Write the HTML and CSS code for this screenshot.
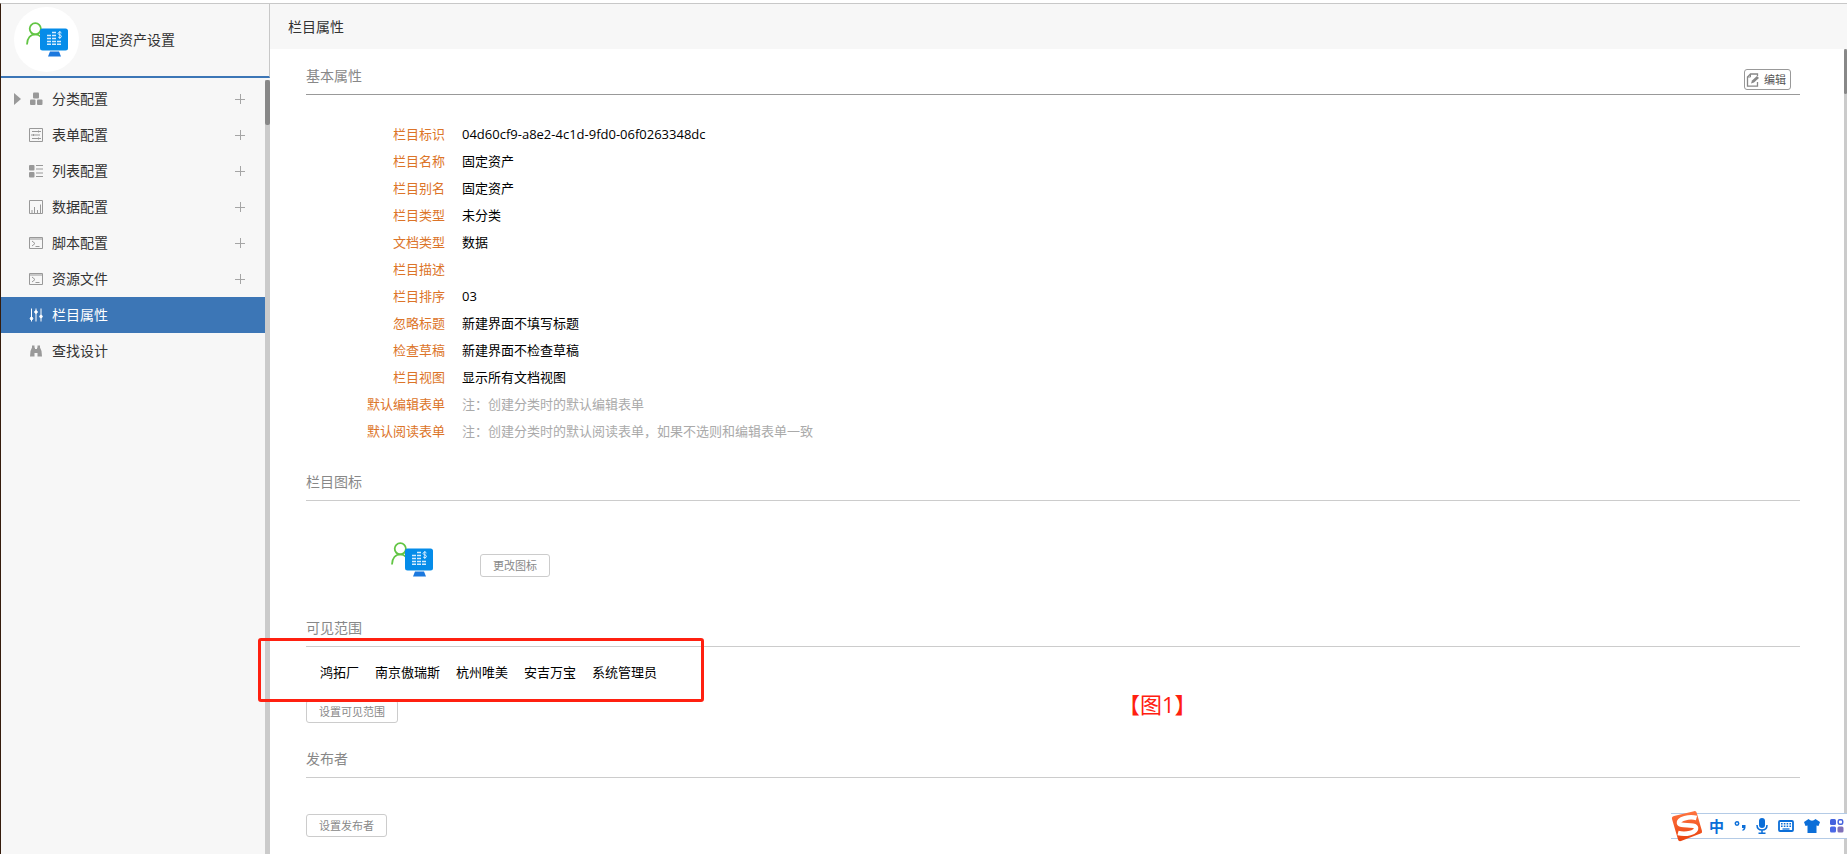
FILE: index.html
```html
<!DOCTYPE html>
<html lang="zh-CN">
<head>
    <meta charset="UTF-8">
    <title>固定资产设置</title>
    <link rel="stylesheet" href="styles.css">
</head>
<body>
    <!-- shared icon used in the sidebar header and the icon section -->
    <svg class="defs" width="0" height="0" aria-hidden="true">
        <symbol id="asset" viewBox="0 0 42 36">
            <circle cx="9.3" cy="7.8" r="5.6" fill="none" stroke="#62c544" stroke-width="1.8"/>
            <path d="M1 23.500C1 17 4.500 13.400 9.500 13.400Q12.500 13.400 15 16" fill="none" stroke="#62c544" stroke-width="1.8"/>
            <rect x="14" y="7.500" width="28" height="22" rx="2.5" fill="#058ce9"/>
            <path d="M24 30.500h9l2 5H22z" fill="#1b78de"/>
            <path d="M21 14.500h4M21 17.500h4M21 20.500h4M21 23.300h4M26 11.500h4M26 14.500h4M26 17.500h4M26 20.500h4M26 23.300h4M31 20.500h4M31 23.300h4" stroke="#d5ecff" stroke-width="1.6"/>
            <path d="M35.500 12C35 10.800 32 10.800 32 12.500C32 14 35.500 13.500 35.500 15.500C35.500 17 32.500 17 32 15.700M33.800 10v8" fill="none" stroke="#d5ecff" stroke-width="1"/>
        </symbol>
    </svg>

    <div class="page">
        <aside class="sidebar">
            <header class="app-title">
                <span class="avatar"><svg class="asset-icon"><use href="#asset"/></svg></span>
                <span>固定资产设置</span>
            </header>
            <div class="sidebar-body">
                <nav class="menu">
                    <div class="menu-item">
                        <span class="caret"></span>
                        <svg class="icon" viewBox="0 0 14 14" fill="#999"><rect x="4" y="0.500" width="6" height="6" rx="1"/><rect x="1" y="7.500" width="5.500" height="5.500" rx="1"/><rect x="8" y="7.500" width="5.500" height="5.500" rx="1"/></svg>
                        <a href="#">分类配置</a>
                        <button class="add" aria-label="添加分类配置"></button>
                    </div>
                    <div class="menu-item">
                        <svg class="icon" viewBox="0 0 14 14" fill="none" stroke="#999"><path d="M.5 .5h13v13H.5zM3 3.500h9M2 7h9M3 10.500h9M9.500 2.500v2M4.500 6v2M9.500 9.500v2"/></svg>
                        <a href="#">表单配置</a>
                        <button class="add" aria-label="添加表单配置"></button>
                    </div>
                    <div class="menu-item">
                        <svg class="icon" viewBox="0 0 14 14" fill="#999"><rect x="0" y="1" width="5.500" height="5.500" rx="1"/><rect x="0" y="8" width="5.500" height="5.500" rx="1"/><path d="M7 1h7v1H7zM7 4.500h7v1H7zM7 8.500h7v1H7zM7 12h7v1H7z"/></svg>
                        <a href="#">列表配置</a>
                        <button class="add" aria-label="添加列表配置"></button>
                    </div>
                    <div class="menu-item">
                        <svg class="icon" viewBox="0 0 14 14" fill="none" stroke="#999"><path d="M.5 .5h13v13H.5z"/><path d="M3 13v-3M5.500 13V7M8.500 13v-3M11.500 13V4.500"/></svg>
                        <a href="#">数据配置</a>
                        <button class="add" aria-label="添加数据配置"></button>
                    </div>
                    <div class="menu-item">
                        <svg class="icon" viewBox="0 0 14 14" fill="none" stroke="#999"><path d="M.5 1.500h13v11H.5zM1 3h12M3 5l3 2.500-3 2.500M6.500 10.500h4"/></svg>
                        <a href="#">脚本配置</a>
                        <button class="add" aria-label="添加脚本配置"></button>
                    </div>
                    <div class="menu-item">
                        <svg class="icon" viewBox="0 0 14 14" fill="none" stroke="#999"><path d="M.5 1.500h13v11H.5zM1 3h12M3 5l3 2.500-3 2.500M6.500 10.500h4"/></svg>
                        <a href="#">资源文件</a>
                        <button class="add" aria-label="添加资源文件"></button>
                    </div>
                    <div class="menu-item active">
                        <svg class="icon" viewBox="0 0 14 14" fill="#fff" stroke="#fff"><path d="M2.500 .5v13M7 .5v13M12 .5v13"/><circle cx="2.500" cy="10.500" r="1.300"/><circle cx="7" cy="4" r="1.300"/><circle cx="12" cy="8.500" r="1.300"/></svg>
                        <a href="#">栏目属性</a>
                    </div>
                    <div class="menu-item">
                        <svg class="icon" viewBox="0 0 14 14" fill="#999"><path d="M3 1.500h2.500v2L6 4v1h2V4l.5-.5v-2H11v2l1.500 3.500.5 5.500H8.500V9h-3v3.500H1L1.500 7 3 3.500z"/></svg>
                        <a href="#">查找设计</a>
                    </div>
                </nav>
                <div class="scrollbar"><div class="thumb"></div></div>
            </div>
        </aside>

        <main class="main">
            <h1>栏目属性</h1>
            <div class="main-body">
                <div class="content">
                    <section>
                        <h2 class="dark">基本属性
                            <button class="btn edit">
                                <svg width="14" height="14" viewBox="0 0 14 14"><path d="M11.500 9v4.200H1.500V4L4.500 1h7v2" fill="none" stroke="#888" stroke-width="1.300"/><path d="M1.500 4h3V1" fill="none" stroke="#888"/><path d="M5 10.500l1-3 5-4.500 2 2-5 4.500z" fill="#888"/></svg>编辑
                            </button>
                        </h2>
                        <dl class="props">
                            <dt>栏目标识</dt><dd>04d60cf9-a8e2-4c1d-9fd0-06f0263348dc</dd>
                            <dt>栏目名称</dt><dd>固定资产</dd>
                            <dt>栏目别名</dt><dd>固定资产</dd>
                            <dt>栏目类型</dt><dd>未分类</dd>
                            <dt>文档类型</dt><dd>数据</dd>
                            <dt>栏目描述</dt><dd></dd>
                            <dt>栏目排序</dt><dd>03</dd>
                            <dt>忽略标题</dt><dd>新建界面不填写标题</dd>
                            <dt>检查草稿</dt><dd>新建界面不检查草稿</dd>
                            <dt>栏目视图</dt><dd>显示所有文档视图</dd>
                            <dt>默认编辑表单</dt><dd class="note">注：创建分类时的默认编辑表单</dd>
                            <dt>默认阅读表单</dt><dd class="note">注：创建分类时的默认阅读表单，如果不选则和编辑表单一致</dd>
                        </dl>
                    </section>

                    <section>
                        <h2>栏目图标</h2>
                        <div class="icon-row">
                            <svg class="asset-icon"><use href="#asset"/></svg>
                            <button class="btn">更改图标</button>
                        </div>
                    </section>

                    <section>
                        <h2>可见范围</h2>
                        <ul class="scope">
                            <li>鸿拓厂</li>
                            <li>南京傲瑞斯</li>
                            <li>杭州唯美</li>
                            <li>安吉万宝</li>
                            <li>系统管理员</li>
                        </ul>
                        <button class="btn">设置可见范围</button>
                    </section>

                    <section>
                        <h2>发布者</h2>
                        <div class="publisher"><button class="btn">设置发布者</button></div>
                    </section>
                </div>
                <div class="scrollbar"><div class="thumb"></div></div>
            </div>
        </main>

        <!-- annotations -->
        <div class="mark-box"></div>
        <div class="mark-text">【图1】</div>

        <!-- input method bar -->
        <div class="ime">
            <svg class="ime-logo" width="32" height="32" viewBox="0 0 32 32">
                <defs><linearGradient id="orange" x1="0" y1="0" x2="0" y2="1"><stop offset="0" stop-color="#ff7440"/><stop offset="1" stop-color="#e9420f"/></linearGradient></defs>
                <path d="M3 6L23 1.200q2.200-.5 2.700 1.500L31 21q.5 2-1.500 2.600L10 31q-2.500.6-3-1.500L1 9q-.5-2.300 2-3z" fill="url(#orange)"/>
                <path d="M25.500 8C18 6 7.500 9 8 13C8.500 17 24.500 13.500 25 18C25.500 22.500 15 25 7 23" fill="none" stroke="#fff" stroke-width="4.600"/>
            </svg>
            <span class="ime-lang">中</span>
            <svg width="12" height="12" viewBox="0 0 12 12"><circle cx="3" cy="3.500" r="1.700" fill="none" stroke="#0b6ed8" stroke-width="1.500"/><path d="M8 5h3.500v3q-.5 2.500-3 3v-1.500q1.200-.5 1.200-1.500H8z" fill="#0b6ed8"/></svg>
            <svg width="12" height="16" viewBox="0 0 12 16"><rect x="3" y="0" width="6" height="10" rx="3" fill="#0b6ed8"/><path d="M1 7q0 5 5 5t5-5M6 12v3M2.500 15.200h7" fill="none" stroke="#0b6ed8" stroke-width="1.500"/></svg>
            <svg width="16" height="12" viewBox="0 0 16 12"><rect x="1" y="1" width="14" height="10" rx="1" fill="none" stroke="#0b6ed8" stroke-width="1.800"/><path d="M3 3.800h10M3 6.200h10" stroke="#0b6ed8" stroke-width="1.500" stroke-dasharray="1.600 1.200"/><path d="M4.500 9h7" stroke="#0b6ed8" stroke-width="1.300"/></svg>
            <svg width="16" height="14" viewBox="0 0 16 14"><path d="M4.500 0Q8 3.500 11.500 0L16 3l-1.500 4-2-.5V14h-9V6.500l-2 .5L0 3z" fill="#0b6ed8"/></svg>
            <svg width="14" height="14" viewBox="0 0 14 14"><rect x="0" y="0" width="6" height="6" rx="1.500" fill="#4563de"/><rect x="8.200" y=".8" width="4.500" height="4.500" rx="1.500" fill="none" stroke="#4563de" stroke-width="1.500"/><rect x="0" y="7.500" width="6" height="6" rx="1.500" fill="#4a68e6"/><rect x="7.500" y="7.500" width="6" height="6" rx="1.500" fill="#8070b8"/></svg>
        </div>
    </div>
</body>
</html>
```

FILE: styles.css
```css
* {
    box-sizing: border-box;
}
body {
    margin: 0;
    font-family: "Open Sans", "Noto Sans CJK SC", sans-serif;
    font-size: 13px;
    color: #000;
    background-color: #fff;
}
.defs {
    position: absolute;
}
.page {
    position: relative;
    display: flex;
    height: 100vh;
    padding-top: 3px;
    overflow: hidden;
}
.sidebar {
    display: flex;
    flex-direction: column;
    flex: none;
    width: 270px;
    border-top: 1px solid #c8c8c8;
    border-left: 1px solid #351c0c;
    background-color: #f7f7f7;
}
.app-title {
    display: flex;
    align-items: center;
    gap: 12px;
    height: 74px;
    padding: 0 0 2px 13px;
    border-right: 1px solid #c8c8c8;
    border-bottom: 2px solid #3c76b6;
    font-size: 14px;
    color: #333;
}
.avatar {
    display: flex;
    align-items: center;
    justify-content: center;
    width: 65px;
    height: 65px;
    border-radius: 50%;
    background-color: #fff;
}
.asset-icon {
    width: 42px;
    height: 36px;
}
.sidebar-body {
    display: flex;
    flex: 1;
    padding-top: 2px;
}
.menu {
    flex: 1;
    padding-top: 1px;
}
.menu-item {
    display: flex;
    align-items: center;
    height: 36px;
    padding: 0 20px 0 28px;
    position: relative;
}
.menu-item a {
    flex: 1;
    margin-left: 9px;
    font-size: 14px;
    line-height: 36px;
    color: #333;
    text-decoration: none;
}
.menu-item.active {
    background-color: #3c76b6;
}
.menu-item.active a {
    color: #fff;
}
.icon {
    width: 14px;
    height: 14px;
}
.caret {
    position: absolute;
    left: 13px;
    top: 12px;
    border: 6px solid transparent;
    border-left: 7px solid #999;
    border-right: 0;
}
.add {
    width: 10px;
    height: 10px;
    padding: 0;
    border: 0;
    background: linear-gradient(#a5a5a5, #a5a5a5) center / 10px 1px no-repeat,
                linear-gradient(#a5a5a5, #a5a5a5) center / 1px 10px no-repeat;
    cursor: pointer;
}
.scrollbar {
    flex: none;
    width: 5px;
    background-color: #cbcbcb;
}
.thumb {
    height: 45px;
    border-radius: 2px;
    background-color: #888;
}
.main {
    display: flex;
    flex-direction: column;
    flex: 1;
    min-width: 0;
    border-top: 1px solid #c8c8c8;
}
h1 {
    margin: 0;
    padding: 0 18px;
    height: 45px;
    line-height: 45px;
    font-size: 14px;
    font-weight: normal;
    color: #333;
    background-color: #f7f7f7;
}
.main-body {
    display: flex;
    flex: 1;
    min-height: 0;
}
.main-body .scrollbar {
    width: 3px;
}
.content {
    flex: 1;
    padding: 9px 44px 0 36px;
}
h2 {
    display: flex;
    justify-content: space-between;
    margin: 0;
    border-bottom: 1px solid #ccc;
    font-size: 14px;
    font-weight: normal;
    line-height: 36px;
    color: #888;
}
h2.dark {
    border-bottom-color: #999;
}
.btn {
    height: 23px;
    padding: 0 12px;
    border: 1px solid #ccc;
    border-radius: 3px;
    background-color: #fff;
    font-family: inherit;
    font-size: 11px;
    line-height: 20px;
    color: #888;
    cursor: pointer;
}
.btn.edit {
    display: flex;
    align-items: center;
    gap: 4px;
    height: 21px;
    margin: 11px 9px 0 0;
    padding: 0 4px 0 1px;
    border-color: #999;
    color: #555;
}
.props {
    display: grid;
    grid-template-columns: 139px 1fr;
    column-gap: 17px;
    margin: 0;
    padding: 26px 0 19px;
    line-height: 27px;
}
.props dt {
    text-align: right;
    color: #dc7428;
}
.props dd {
    margin: 0;
    min-height: 27px;
}
.props .note {
    color: #aaa;
}
.icon-row {
    display: flex;
    align-items: flex-end;
    gap: 47px;
    height: 109px;
    padding: 0 0 33px 85px;
}
.scope {
    display: flex;
    gap: 16px;
    margin: 0;
    padding: 12px 14px 14px;
    list-style-type: none;
    line-height: 27px;
}
.scope + .btn {
    display: block;
    margin-bottom: 18px;
}
.publisher {
    padding-top: 36px;
}
.mark-box {
    position: absolute;
    left: 258px;
    top: 638px;
    width: 446px;
    height: 64px;
    border: 3px solid #ff2010;
    border-radius: 3px;
}
.mark-text {
    position: absolute;
    left: 1118px;
    top: 688px;
    font-size: 22px;
    line-height: 32px;
    color: #ff2010;
}
.ime {
    position: absolute;
    right: 0;
    top: 813px;
    display: flex;
    align-items: center;
    gap: 10px;
    height: 26px;
    padding-right: 3px;
    border: 1px solid #b4cbe6;
    border-left: 0;
    border-right: 0;
    background-color: #fff;
}
.ime-logo {
    margin-right: -4px;
}
.ime-lang {
    font-size: 15px;
    font-weight: bold;
    line-height: 24px;
    color: #0b6ed8;
}
```
